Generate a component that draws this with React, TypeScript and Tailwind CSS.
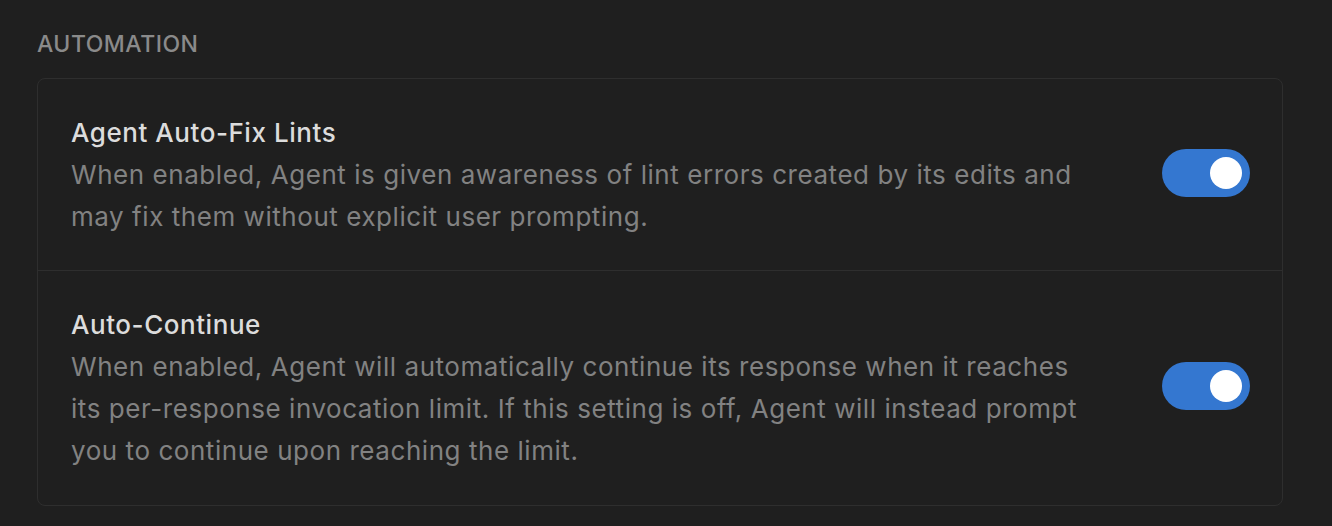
import React from "react";

function Toggle() {
  return (
    <div className="w-[88px] h-[48px] mb-[4px] rounded-full bg-[#3477d0] flex items-center justify-end pr-[8px] shrink-0">
      <div className="w-[32px] h-[32px] rounded-full bg-white" />
    </div>
  );
}

function Row({ title, desc, last }: { title: string; desc: string; last?: boolean }) {
  return (
    <div
      className={`flex items-center gap-[64px] pl-[33px] pr-[32px] ${
        last ? "py-[33px]" : "pt-[33px] pb-[32px] border-b border-[#2e2e2e]"
      }`}
    >
      <div className="flex-1 min-w-0">
        <div className="text-[26px] leading-[42px] font-medium tracking-[0.55px] text-[#dcdcdc]">{title}</div>
        <div className="text-[26px] leading-[42px] tracking-[0.55px] text-[#828282]">{desc}</div>
      </div>
      <Toggle />
    </div>
  );
}

export default function App() {
  return (
    <div
      className="w-[1332px] h-[526px] bg-[#1f1f1f] px-[37px] pt-[28px] overflow-hidden"
      style={{ fontFamily: "Inter, 'Noto Sans', sans-serif" }}
    >
      <div className="text-[23px] leading-[32px] font-medium tracking-[0.5px] text-[#8a8a8a] mb-[18px]">AUTOMATION</div>
      <div className="w-[1246px] border border-[#2e2e2e] rounded-[8px]">
        <Row
          title="Agent Auto-Fix Lints"
          desc="When enabled, Agent is given awareness of lint errors created by its edits and may fix them without explicit user prompting."
        />
        <Row
          last
          title="Auto-Continue"
          desc="When enabled, Agent will automatically continue its response when it reaches its per-response invocation limit. If this setting is off, Agent will instead prompt you to continue upon reaching the limit."
        />
      </div>
    </div>
  );
}
